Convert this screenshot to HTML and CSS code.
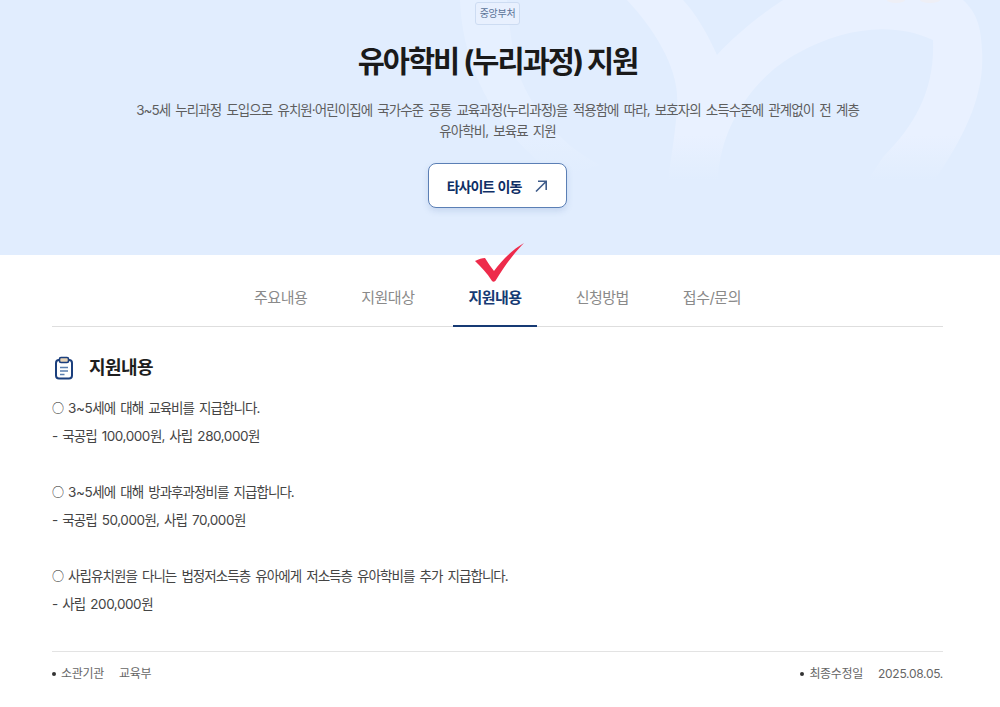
FILE: index.html
```html
<!DOCTYPE html>
<html lang="ko">
<head>
<meta charset="utf-8">
<title>유아학비 (누리과정) 지원</title>
<link rel="stylesheet" href="styles.css">
</head>
<body>
<header class="hero">
  <svg class="hero-bg" width="1000" height="255" viewBox="0 0 1000 255" aria-hidden="true">
    <defs>
      <linearGradient id="fadeA" gradientUnits="userSpaceOnUse" x1="0" y1="135" x2="0" y2="180">
        <stop offset="0" stop-color="#e9f1ff"/>
        <stop offset="1" stop-color="#e9f1ff" stop-opacity="0"/>
      </linearGradient>
      <linearGradient id="fadeB" gradientUnits="userSpaceOnUse" x1="0" y1="120" x2="0" y2="175">
        <stop offset="0" stop-color="#e6f0ff"/>
        <stop offset="1" stop-color="#e6f0ff" stop-opacity="0"/>
      </linearGradient>
    </defs>
    <path fill="url(#fadeB)" d="M460 0 C 462 60 490 130 560 178 L 600 165 C 560 145 520 100 513 50 C 510 30 508 15 507 0 Z"/>
    <path fill="url(#fadeA)" d="M627 0 C 655 30 680 70 677 105 C 676 130 672 150 668 180 L 718 180 C 720 125 755 75 800 52 C 840 30 890 20 933 40 C 935 90 915 125 883 157 L 868 180 L 935 180 C 965 135 985 95 982 50 C 981 25 976 12 963 0 L 783 0 C 760 15 735 35 717 55 C 708 35 697 15 683 0 Z"/>
    <ellipse class="spot" cx="896" cy="0" rx="9" ry="3"/>
    <ellipse class="spot" cx="930" cy="0" rx="10" ry="3"/>
  </svg>
  <span class="badge">중앙부처</span>
  <h1 class="title">유아학비 (누리과정) 지원</h1>
  <p class="desc">3~5세 누리과정 도입으로 유치원·어린이집에 국가수준 공통 교육과정(누리과정)을 적용함에 따라, 보호자의 소득수준에 관계없이 전 계층<br>유아학비, 보육료 지원</p>
  <a class="site-btn" href="#">타사이트 이동
    <svg class="site-icon" width="14" height="14" viewBox="0 0 14 14" fill="none" aria-hidden="true"><path d="M2 12.5 L12 2.5 M4 2.2 H12.2 V11" stroke="#3f5c8a" stroke-width="1.6"/></svg>
  </a>
</header>
<main class="wrap">
  <nav class="tabs">
    <a class="tab" href="#">주요내용</a>
    <a class="tab" href="#">지원대상</a>
    <a class="tab active" href="#">지원내용
      <svg class="check" width="52" height="42" viewBox="0 0 52 42" aria-hidden="true"><path d="M1 18 C 5 16 8 15 11 15 C 14 20 17 24 20 28 C 28 17 38 7 50 0 C 40 10 30 24 22 37 C 21 39 19 39 18 38 C 13 30 7 24 1 18 Z" fill="#ee2b4b"/></svg>
    </a>
    <a class="tab" href="#">신청방법</a>
    <a class="tab" href="#">접수/문의</a>
  </nav>
  <section class="content">
    <h2 class="section-title">
      <svg width="24" height="24" viewBox="0 0 24 24" fill="none" aria-hidden="true">
        <rect x="4" y="4" width="16" height="18.5" rx="3" stroke="#1b3f7d" stroke-width="2"/>
        <rect x="7.5" y="1.5" width="9" height="5" rx="1.5" fill="#e9d4b6" stroke="#1b3f7d" stroke-width="1.6"/>
        <path d="M8 11.5 H16 M8 15 H16 M8 18.5 H12.5" stroke="#5a7fb0" stroke-width="1.5"/>
      </svg>
      지원내용
    </h2>
    <div class="body-text">
      <p><span class="circle">○</span> <span class="num">3~5</span>세에 대해 교육비를 지급합니다.</p>
      <p>- 국공립 <span class="num">100,000</span>원, 사립 <span class="num">280,000</span>원</p>
      <p>&nbsp;</p>
      <p><span class="circle">○</span> <span class="num">3~5</span>세에 대해 방과후과정비를 지급합니다.</p>
      <p>- 국공립 <span class="num">50,000</span>원, 사립 <span class="num">70,000</span>원</p>
      <p>&nbsp;</p>
      <p><span class="circle">○</span> 사립유치원을 다니는 법정저소득층 유아에게 저소득층 유아학비를 추가 지급합니다.</p>
      <p>- 사립 <span class="num">200,000</span>원</p>
    </div>
  </section>
  <footer class="meta">
    <div class="meta-item"><span class="meta-label">소관기관</span><span>교육부</span></div>
    <div class="meta-item"><span class="meta-label">최종수정일</span><span>2025.08.05.</span></div>
  </footer>
</main>
</body>
</html>
```
FILE: styles.css
```css
* { box-sizing: border-box; }
html, body { margin: 0; padding: 0; }
body {
  font-family: "Inter", "Noto Sans CJK KR", "Noto Sans", sans-serif;
  background: #fff;
  color: #1e1e1e;
  overflow: hidden;
  height: 707px;
}
a { text-decoration: none; color: inherit; }
.hero {
  position: relative;
  height: 255px;
  padding: 2px 5px 0 0;
  background: #e1edfe;
  display: flex;
  flex-direction: column;
  align-items: center;
  overflow: hidden;
}
.hero-bg { position: absolute; left: 0; top: 0; }
.spot { fill: #eeeff6; }
.badge {
  position: relative;
  height: 23px;
  padding: 0 4px;
  border: 1px solid #cddcf2;
  border-radius: 3px;
  font-size: 10px;
  line-height: 21px;
  letter-spacing: -0.3px;
  color: #5b7397;
  background: #e8f0fe;
}
.title {
  position: relative;
  margin: 14px 0 0;
  font-size: 29.5px;
  line-height: 44px;
  font-weight: 700;
  letter-spacing: -2px;
  color: #1a1a1a;
}
.desc {
  position: relative;
  margin: 17px 0 0;
  font-size: 13.5px;
  line-height: 21px;
  letter-spacing: -0.95px;
  word-spacing: 2.3px;
  text-align: center;
  color: #5e5e5e;
}
.site-btn {
  position: relative;
  margin-top: 21px;
  width: 139px;
  height: 45px;
  display: flex;
  align-items: center;
  justify-content: center;
  gap: 13px;
  background: #fff;
  border: 1px solid #5b7fb5;
  border-radius: 8px;
  box-shadow: 0 3px 6px rgba(90, 125, 180, 0.2);
  font-size: 14px;
  font-weight: 700;
  letter-spacing: -1px;
  word-spacing: 1px;
  color: #0f2f66;
}
.wrap { width: 891px; margin: 0 0 0 52px; }
.tabs {
  display: flex;
  justify-content: center;
  gap: 24px;
  height: 72px;
  border-bottom: 1px solid #dedede;
}
.tab {
  position: relative;
  padding: 12px 15px 0;
  display: flex;
  align-items: center;
  justify-content: center;
  white-space: nowrap;
  font-size: 15px;
  letter-spacing: -0.5px;
  color: #8a8a8a;
}
.tab.active {
  color: #163a74;
  font-weight: 700;
  border-bottom: 2px solid #163a74;
  height: 72px;
}
.check { position: absolute; left: 21px; top: -12px; }
.content { padding-top: 28px; }
.section-title {
  margin: 0 0 13px;
  display: flex;
  align-items: center;
  gap: 13px;
  font-size: 18px;
  line-height: 26px;
  font-weight: 700;
  letter-spacing: -0.6px;
  color: #1e1e1e;
}
.body-text {
  font-size: 13.5px;
  line-height: 28px;
  letter-spacing: -0.95px;
  word-spacing: 2.2px;
  color: #444;
  padding-bottom: 33px;
}
.body-text p { margin: 0; }
.circle {
  font-family: "Noto Sans CJK KR", sans-serif;
  font-size: 12px;
  line-height: 1;
  letter-spacing: -1px;
  color: #222;
}
.num { letter-spacing: -0.45px; }
.meta {
  border-top: 1px solid #e3e3e3;
  display: flex;
  justify-content: space-between;
  padding-top: 13px;
  font-size: 12px;
  line-height: 18px;
  letter-spacing: -0.3px;
  color: #666;
}
.meta-item { display: flex; gap: 15px; }
.meta-label { position: relative; padding-left: 9px; }
.meta-label::before {
  content: "";
  position: absolute;
  left: 0;
  top: 7px;
  width: 4px;
  height: 4px;
  border-radius: 50%;
  background: #333;
}
```
